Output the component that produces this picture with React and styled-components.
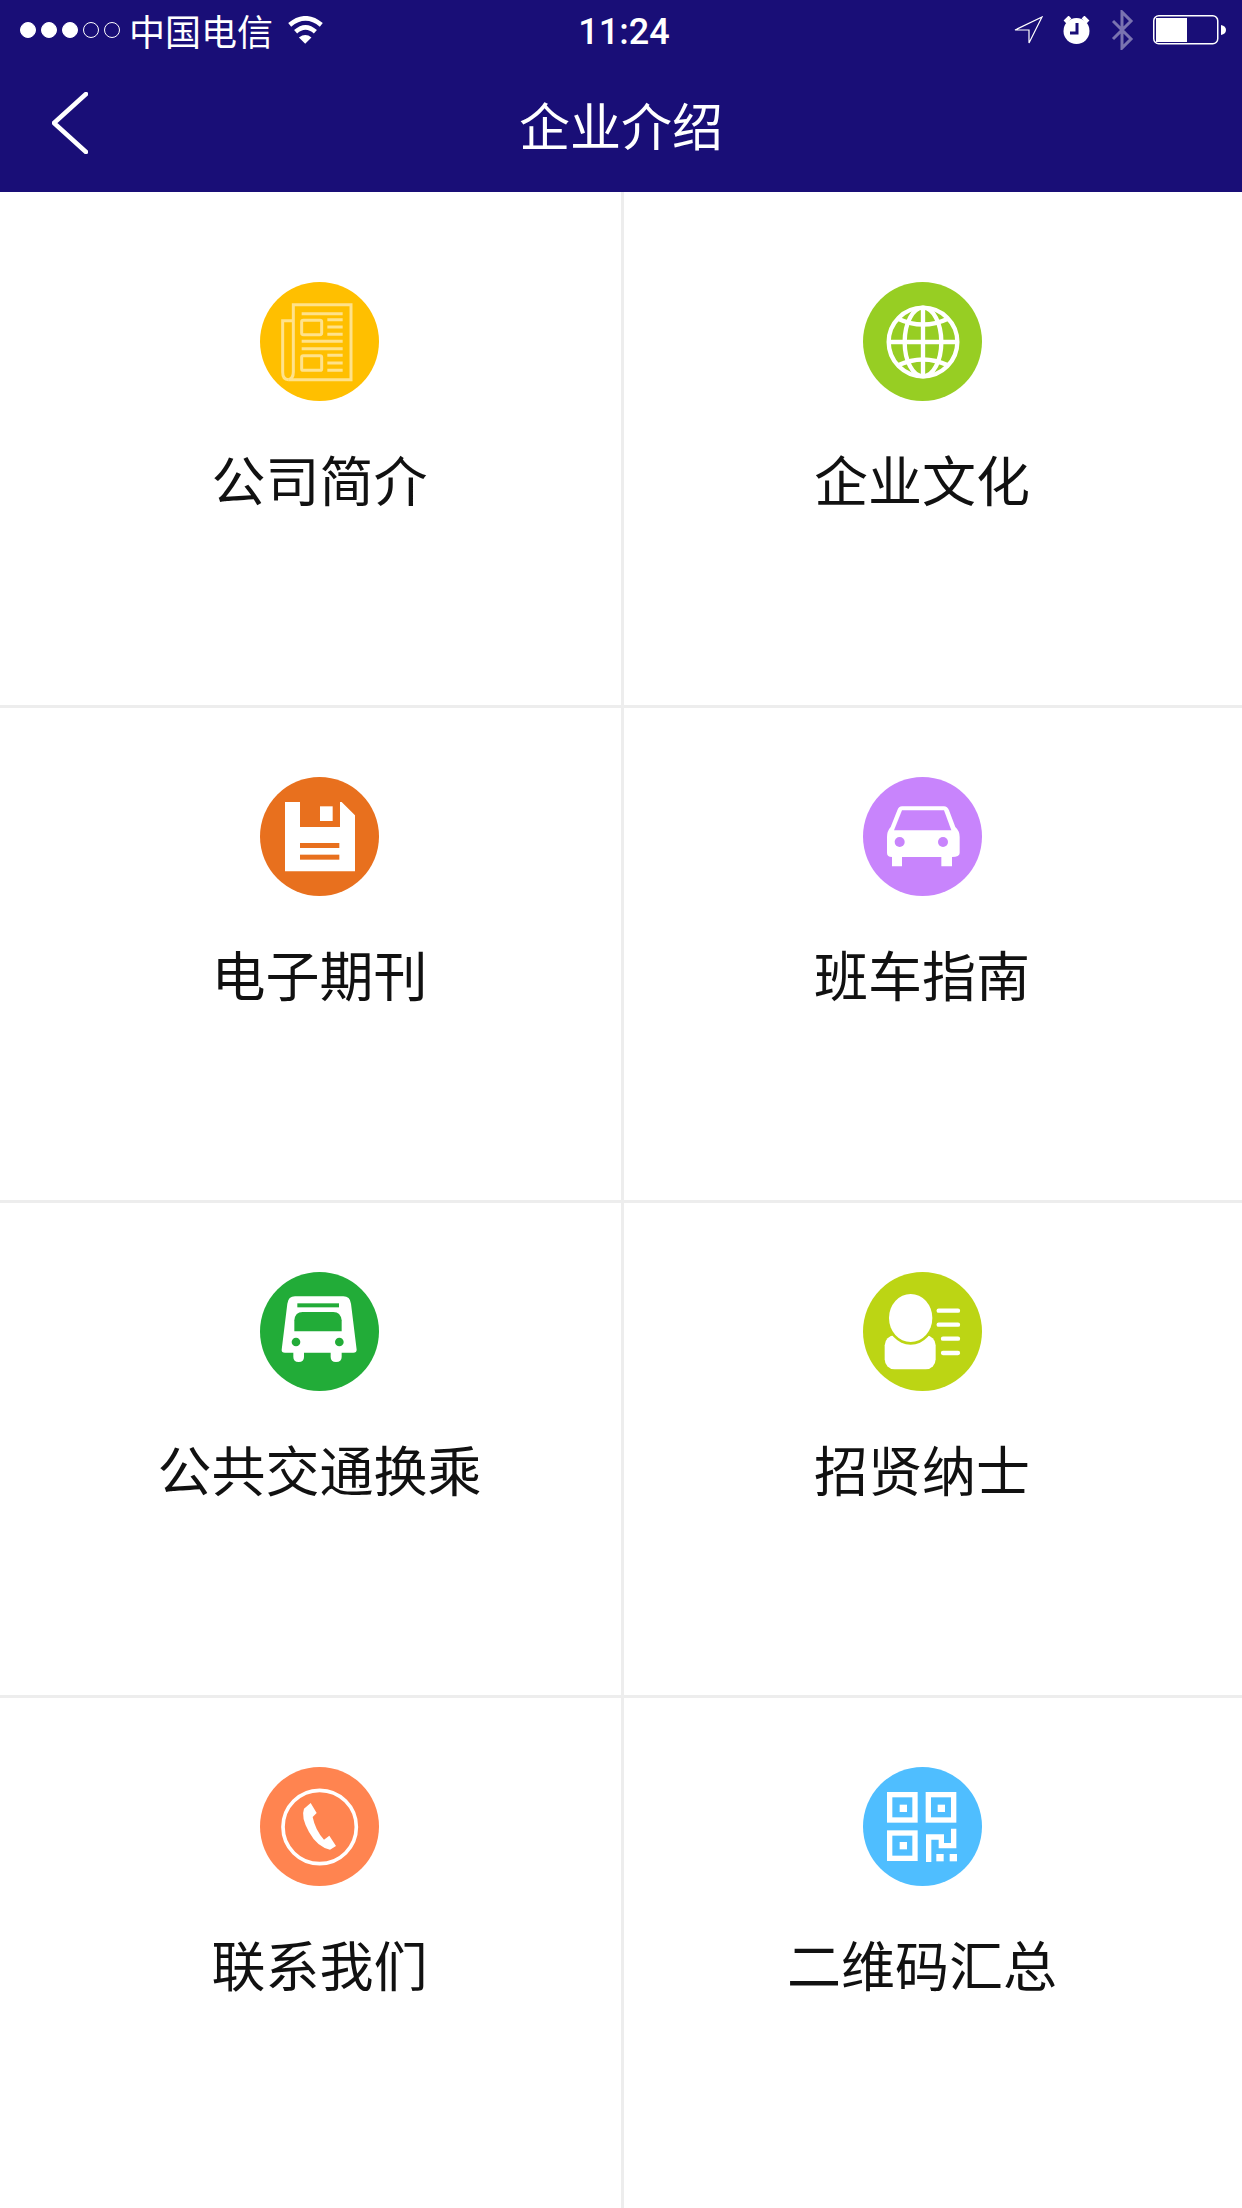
import React from 'react'
import styled, { createGlobalStyle } from 'styled-components'

const GlobalStyle = createGlobalStyle`
html, body {
  margin: 0;
  padding: 0;
  background: #fff;
}
* {
  box-sizing: border-box;
}
`

// icon drawings use a 357 unit square, the same size for every circle
const NewsIcon = () => (
  <IconSvg viewBox="60 50 357 357">
    <g fill="none" stroke="#ffe28a" strokeWidth="9">
      <path d="M160 320V118H333V343H145Q160 340 160 320Z" />
      <path d="M160 166H128V320Q128 343 145 343" />
      <rect x="185" y="165" width="60" height="43" rx="5" />
      <rect x="185" y="271" width="60" height="44" rx="5" />
      <path d="M185 145H308M262 163H308M262 185H308M262 207H308M185 228H308M185 250H308M262 270H308M262 293H308M262 315H308" />
    </g>
  </IconSvg>
)

const GlobeIcon = () => (
  <IconSvg viewBox="55 50 357 357">
    <g fill="none" stroke="#fff" strokeWidth="13">
      <circle cx="235" cy="230" r="103" />
      <ellipse cx="235" cy="230" rx="55" ry="103" />
      <path d="M235 125V335M130 230H340" />
      <path d="M160 160Q235 195 310 160M160 300Q235 265 310 300" />
    </g>
  </IconSvg>
)

const DiskIcon = ({ color }) => (
  <IconSvg viewBox="60 50 357 357">
    <path fill="#fff" d="M135 125H180V200H300V125H305L345 165V333H135Z" />
    <rect x="240" y="138" width="38" height="44" fill="#fff" />
    <rect x="180" y="248" width="118" height="15" fill={color} />
    <rect x="180" y="283" width="118" height="15" fill={color} />
  </IconSvg>
)

const CarIcon = ({ color }) => (
  <IconSvg viewBox="55 50 357 357">
    <path fill="#fff" d="M172 138H298Q308 138 313 150L332 200Q345 212 345 230V278Q345 290 322 290V318H290V290H172V318H142V290Q127 290 127 278V230Q127 212 138 200L158 150Q162 138 172 138Z" />
    <path fill={color} d="M172 150H298L320 210H148Z" />
    <circle cx="165" cy="245" r="15" fill={color} />
    <circle cx="295" cy="245" r="15" fill={color} />
  </IconSvg>
)

const BusIcon = ({ color }) => (
  <IconSvg viewBox="60 50 357 357">
    <path fill="#fff" d="M165 123H310Q330 123 333 145L350 283Q350 292 340 292H305V305Q305 320 288 320Q272 320 272 305V292H192V305Q192 320 176 320Q160 320 160 305V292H135Q124 292 125 283L142 145Q145 123 165 123Z" />
    <rect x="172" y="144" width="125" height="12" fill={color} />
    <path fill={color} d="M188 170H280Q302 170 305 195V228H163V195Q165 170 188 170Z" />
    <circle cx="168" cy="260" r="13" fill={color} />
    <circle cx="298" cy="260" r="13" fill={color} />
  </IconSvg>
)

const StaffIcon = ({ color }) => (
  <IconSvg viewBox="55 50 357 357">
    <rect x="120" y="240" width="153" height="102" rx="30" fill="#fff" />
    <ellipse cx="198" cy="188" rx="73" ry="80" fill={color} />
    <ellipse cx="198" cy="188" rx="65" ry="72" fill="#fff" />
    <path fill="none" stroke="#fff" strokeWidth="13" strokeLinecap="round" d="M282 166H340M282 208H340M295 250H340M295 293H340" />
  </IconSvg>
)

const PhoneIcon = () => (
  <IconSvg viewBox="60 50 357 357">
    <circle cx="239" cy="230" r="110" fill="none" stroke="#fff" strokeWidth="11" />
    <path fill="#fff" d="M212 158L230 188L218 200Q226 240 252 268L268 256L288 287L270 298Q232 290 207 245Q182 200 192 175Z" />
  </IconSvg>
)

const QrIcon = () => (
  <IconSvg viewBox="55 50 357 357">
    <g fill="none" stroke="#fff" strokeWidth="16">
      <rect x="135" y="133" width="76" height="76" />
      <rect x="251" y="133" width="76" height="76" />
      <rect x="135" y="248" width="76" height="76" />
      <path d="M252 335V260H290V286H327V235" />
    </g>
    <g fill="#fff">
      <rect x="165" y="163" width="22" height="22" />
      <rect x="279" y="163" width="22" height="22" />
      <rect x="165" y="275" width="22" height="22" />
      <rect x="275" y="311" width="22" height="22" />
      <rect x="315" y="311" width="22" height="22" />
    </g>
  </IconSvg>
)

const entries = [
  { label: '公司简介', color: '#ffbf00', Icon: NewsIcon },
  { label: '企业文化', color: '#97ce23', Icon: GlobeIcon },
  { label: '电子期刊', color: '#e8701e', Icon: DiskIcon },
  { label: '班车指南', color: '#c884fc', Icon: CarIcon },
  { label: '公共交通换乘', color: '#22ac38', Icon: BusIcon },
  { label: '招贤纳士', color: '#bcd514', Icon: StaffIcon },
  { label: '联系我们', color: '#ff8450', Icon: PhoneIcon },
  { label: '二维码汇总', color: '#4fbeff', Icon: QrIcon },
]

const App = () => {
  return (
    <Page>
      <GlobalStyle />
      <Header>
        <StatusBar>
          <StatusLeft>
            <Signal>
              {[true, true, true, false, false].map((on, i) => (
                <SignalDot key={i} $on={on} />
              ))}
            </Signal>
            <Carrier>中国电信</Carrier>
            <svg width="37" height="28" viewBox="865 45 110 85">
              <path d="M872 72Q920 32 968 72M890 93Q920 66 950 93" fill="none" stroke="#fff" strokeWidth="14" />
              <path d="M900 110Q920 96 938 110L919 129Z" fill="#fff" />
            </svg>
          </StatusLeft>
          <Time>11:24</Time>
          <StatusRight>
            <svg width="29" height="28" viewBox="0 0 29 28">
              <path d="M1 14L28 1L15 27V14Z" fill="none" stroke="#fff" strokeWidth="1.2" />
            </svg>
            <svg width="29" height="28" viewBox="0 0 29 28">
              <circle cx="14.5" cy="15" r="13" fill="#fff" />
              <path d="M3 6L8 1M26 6L21 1" stroke="#fff" strokeWidth="4" />
              <path d="M15 7V17H8" fill="none" stroke="#190e77" strokeWidth="3" />
            </svg>
            <svg width="24" height="40" viewBox="0 0 24 40" opacity="0.42">
              <path d="M3 11L21 29L12 38V2L21 11L3 29" fill="none" stroke="#fff" strokeWidth="3" />
            </svg>
            <svg width="73" height="30" viewBox="0 0 73 30">
              <rect x="0.75" y="0.75" width="64" height="28" rx="5" fill="none" stroke="#fff" strokeWidth="1.5" />
              <path d="M3 3H34V27H3Z" fill="#fff" />
              <path d="M68 10Q73 11 73 15Q73 19 68 20Z" fill="#fff" />
            </svg>
          </StatusRight>
        </StatusBar>
        <NavBar>
          <BackIcon width="36" height="62" viewBox="0 0 36 62">
            <path d="M34 2L2 31L34 60" fill="none" stroke="#fff" strokeWidth="4.5" strokeLinecap="round" strokeLinejoin="round" />
          </BackIcon>
          <Title>企业介绍</Title>
        </NavBar>
      </Header>
      <Grid>
        {entries.map(({ label, color, Icon }, i) => (
          <Cell key={label} $right={i % 2 === 1} $first={i < 2}>
            <IconCircle $color={color}>
              <Icon color={color} />
            </IconCircle>
            <Label>{label}</Label>
          </Cell>
        ))}
      </Grid>
    </Page>
  )
}
export default App

const Page = styled.div`
width: 1242px;
height: 2208px;
display: flex;
flex-direction: column;
overflow: hidden;
background: #fff;
font-family: "Noto Sans CJK SC", "Noto Sans", sans-serif;
`
const Header = styled.header`
background: #190e77;
color: #fff;
`
const StatusBar = styled.div`
height: 60px;
display: grid;
grid-template-columns: 1fr auto 1fr;
align-items: center;
padding: 0 16px 0 20px;
`
const StatusLeft = styled.div`
display: flex;
align-items: center;
`
const Signal = styled.div`
display: flex;
gap: 5px;
margin-right: 10px;
`
const SignalDot = styled.span`
width: 16px;
height: 16px;
border-radius: 50%;
border: 1px solid #fff;
background: ${({ $on }) => ($on ? '#fff' : 'transparent')};
`
const Carrier = styled.span`
font-size: 36px;
line-height: 60px;
margin-right: 14px;
margin-left: -1px;
`
const Time = styled.span`
font-family: Roboto, sans-serif;
font-size: 36px;
font-weight: 500;
margin: 3px 0 0 2px;
`
const StatusRight = styled.div`
display: flex;
align-items: center;
justify-content: flex-end;
gap: 19px;
`
const NavBar = styled.nav`
height: 132px;
display: grid;
grid-template-columns: 1fr auto 1fr;
align-items: center;
`
const BackIcon = styled.svg`
margin-left: 52px;
margin-top: -6px;
`
const Title = styled.h1`
margin: -4px 0 0 0;
font-size: 51px;
font-weight: 400;
line-height: 70px;
`
const Grid = styled.main`
flex: 1;
display: grid;
grid-template-columns: 624px 618px;
grid-template-rows: 513px 495px 495px 513px;
`
const Cell = styled.section`
display: flex;
flex-direction: column;
align-items: center;
padding-top: ${({ $first }) => ($first ? '90px' : '69px')};
padding-left: ${({ $right }) => ($right ? '0' : '18px')};
padding-right: ${({ $right }) => ($right ? '22px' : '0')};
border-right: ${({ $right }) => ($right ? 'none' : '3px solid #ededed')};
border-top: ${({ $first }) => ($first ? 'none' : '3px solid #ededed')};
`
const IconCircle = styled.div`
width: 119px;
height: 119px;
border-radius: 50%;
background: ${({ $color }) => $color};
`
const IconSvg = styled.svg`
display: block;
width: 119px;
height: 119px;
`
const Label = styled.div`
margin-top: 38px;
font-size: 54px;
line-height: 80px;
color: #111;
white-space: nowrap;
`
